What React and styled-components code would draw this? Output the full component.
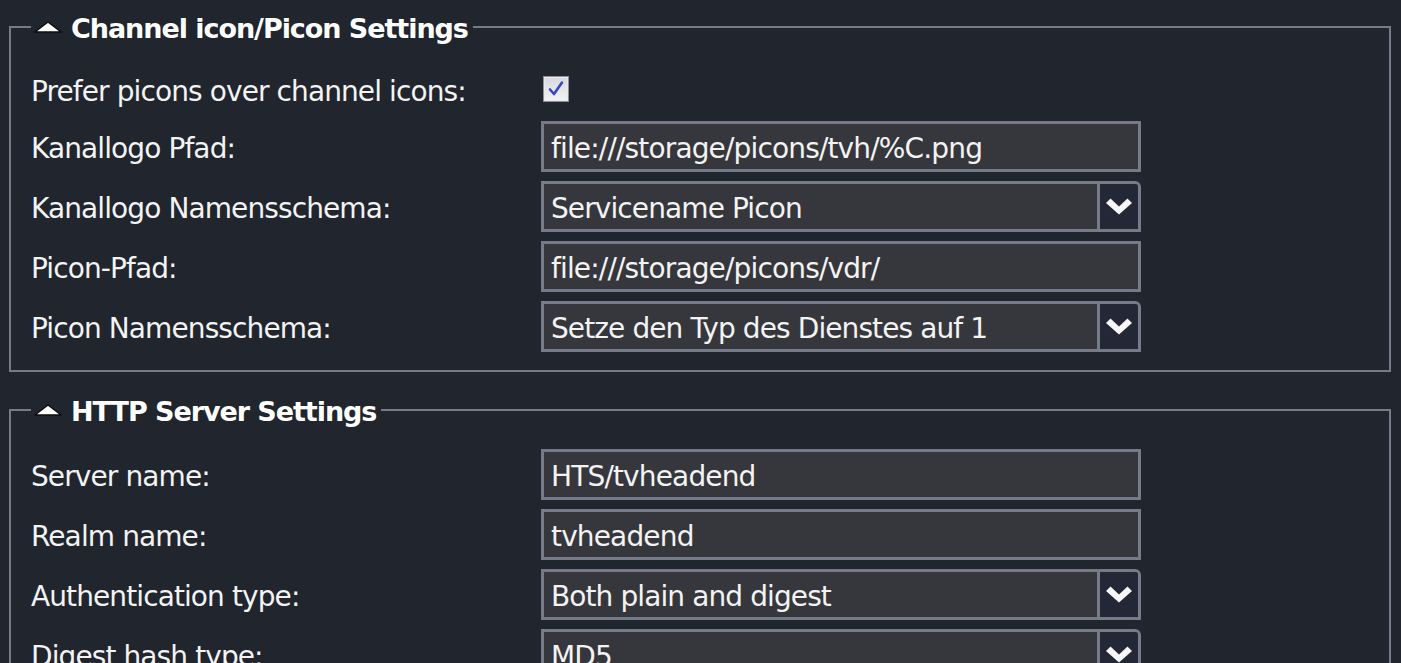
import React from "react";
import styled, { createGlobalStyle } from "styled-components";

const Global = createGlobalStyle`
  html, body {
    margin: 0;
    padding: 0;
    background: #20252e;
    overflow: hidden;
  }
  body {
    font-family: "DejaVu Sans", "Liberation Sans", sans-serif;
    color: #f3f3f3;
  }
`;

const Page = styled.div`
  padding: 10px 10px 0 9px;
`;

const Fieldset = styled.fieldset`
  margin: 0 0 21px;
  border: 2px solid #767b8a;
  padding: 22px 20px 18px 20px;
  min-width: 0;
`;

const Legend = styled.legend`
  padding: 0 5px 0 3px;
  margin: 0;
`;

const LegendInner = styled.span`
  display: inline-flex;
  align-items: center;
  gap: 9px;
  height: 34px;
  padding-top: 3px;
  box-sizing: border-box;
  font-size: 27px;
  font-weight: bold;
  letter-spacing: -1.05px;
  color: #ffffff;
`;

const TriangleIcon = styled.svg`
  flex: none;
  display: block;
  width: 28px;
  height: 12px;
  margin-top: -4px;
`;

const Rows = styled.div`
  display: flex;
  flex-direction: column;
  gap: 9px;
`;

const Row = styled.div`
  display: grid;
  grid-template-columns: 510px 600px;
  align-items: center;
  height: ${(p) => p.$h || 51}px;
`;

const Label = styled.span`
  padding-top: 4px;
  font-size: 28px;
  letter-spacing: -0.9px;
  color: #f3f3f3;
  white-space: nowrap;
`;

const TextInput = styled.input`
  box-sizing: border-box;
  width: 600px;
  height: 51px;
  margin: 0;
  border: 3px solid #767b8a;
  background: #36373c;
  color: #f3f3f3;
  font-family: "DejaVu Sans", "Liberation Sans", sans-serif;
  font-size: 28px;
  letter-spacing: -0.85px;
  padding: 3px 0 0 7px;
  outline: none;
`;

const SelectBox = styled.div`
  box-sizing: border-box;
  width: 600px;
  height: 51px;
  display: flex;
  border: 3px solid #767b8a;
  border-radius: 0 6px 0 0;
  background: #36373c;
  overflow: hidden;
`;

const SelectValue = styled.span`
  flex: 1;
  display: flex;
  align-items: center;
  padding: 3px 0 0 7px;
  font-size: 28px;
  letter-spacing: -0.9px;
  color: #f3f3f3;
  white-space: nowrap;
  overflow: hidden;
`;

const SelectButton = styled.span`
  width: 38px;
  display: flex;
  align-items: center;
  justify-content: center;
  border-left: 3px solid #767b8a;
  background: #232736;
`;

const CheckWrap = styled.span`
  box-sizing: border-box;
  width: 26px;
  height: 26px;
  margin-left: 2px;
  border: 1px solid #8d9096;
  background: linear-gradient(180deg, #d6d8de 0%, #f2f3f5 100%);
  box-shadow: inset 0 0 0 1px #e9eaee;
  display: flex;
  align-items: center;
  justify-content: center;
`;

const Triangle = () => (
  <TriangleIcon viewBox="0 0 28 12">
    <polygon points="1,11 14,1 27,11" fill="#ffffff" stroke="#0b0d12" strokeWidth="1.4" strokeLinejoin="round" />
  </TriangleIcon>
);

const Chevron = () => (
  <svg width="26" height="17" viewBox="0 0 26 17">
    <polygon points="0,5 4.5,0.5 13,8.5 21.5,0.5 26,5 13,16.5" fill="#f7f7f7" />
  </svg>
);

const Check = () => (
  <svg width="18" height="18" viewBox="0 0 18 18">
    <path d="M3 9.5 L7 14 L15 2.5" fill="none" stroke="#3947b8" strokeWidth="2.6" strokeLinecap="round" strokeLinejoin="round" />
  </svg>
);

const Field = ({ label, children, h }) => (
  <Row $h={h}>
    <Label>{label}</Label>
    {children}
  </Row>
);

const Select = ({ value }) => (
  <SelectBox>
    <SelectValue>{value}</SelectValue>
    <SelectButton>
      <Chevron />
    </SelectButton>
  </SelectBox>
);

const Section = ({ title, children }) => (
  <Fieldset>
    <Legend>
      <LegendInner>
        <Triangle />
        {title}
      </LegendInner>
    </Legend>
    <Rows>{children}</Rows>
  </Fieldset>
);

export default function App() {
  return (
    <Page>
      <Global />
      <Section title="Channel icon/Picon Settings">
        <Field label="Prefer picons over channel icons:" h={46}>
          <CheckWrap>
            <Check />
          </CheckWrap>
        </Field>
        <Field label="Kanallogo Pfad:">
          <TextInput readOnly defaultValue="file:///storage/picons/tvh/%C.png" />
        </Field>
        <Field label="Kanallogo Namensschema:">
          <Select value="Servicename Picon" />
        </Field>
        <Field label="Picon-Pfad:">
          <TextInput readOnly defaultValue="file:///storage/picons/vdr/" />
        </Field>
        <Field label="Picon Namensschema:">
          <Select value="Setze den Typ des Dienstes auf 1" />
        </Field>
      </Section>
      <Section title="HTTP Server Settings">
        <Field label="Server name:">
          <TextInput readOnly defaultValue="HTS/tvheadend" />
        </Field>
        <Field label="Realm name:">
          <TextInput readOnly defaultValue="tvheadend" />
        </Field>
        <Field label="Authentication type:">
          <Select value="Both plain and digest" />
        </Field>
        <Field label="Digest hash type:">
          <Select value="MD5" />
        </Field>
      </Section>
    </Page>
  );
}
